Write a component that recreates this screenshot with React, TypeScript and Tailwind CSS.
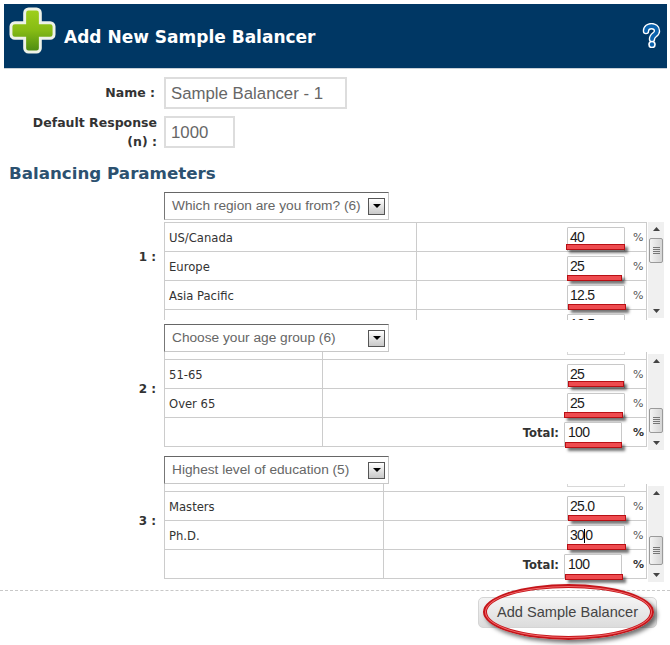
import type { ReactNode } from "react";

const sans = "font-['Tahoma','DejaVu_Sans',sans-serif]";

function Underline({ cls }: { cls: string }) {
  return <div className={`absolute h-[6px] border border-[#b80f14] bg-[#ee4b4f] shadow-[3px_3px_3px_rgba(0,0,0,0.55)] ${cls}`} />;
}

function Pct({ value, line, cls = "" }: { value: ReactNode; line?: string; cls?: string }) {
  return (
    <div className={`relative flex h-[25px] w-[58px] items-start rounded-[1px] border border-[#c8c8c8] bg-white font-['Liberation_Sans',sans-serif] text-[14px] leading-[19px] tracking-[-0.7px] text-[#1a1a1a] ${cls}`}>
      {value}
      {line && <Underline cls={line} />}
    </div>
  );
}

function Row({ label, value, line, col, hidePct }: { label: string; value: ReactNode; line?: string; col: string; hidePct?: boolean }) {
  return (
    <div className="flex h-[29px] border-b border-[#cccccc]">
      <div className={`flex h-full items-center border-r border-[#cccccc] pl-[4px] pt-[3px] text-[11.6px] text-[#333] ${col}`}>{label}</div>
      <div className="flex flex-1 items-start justify-end pr-[3px] pt-[4px]">
        <Pct value={value} line={line} cls="pl-[2px]" />
        <span className={`ml-[8px] mt-[3px] w-[10px] text-[11px] text-[#555] ${hidePct ? "invisible" : ""}`}>%</span>
      </div>
    </div>
  );
}

function Total({ value, line, col }: { value: string; line: string; col: string }) {
  return (
    <div className="flex h-[29px] border-b border-[#cccccc]">
      <div className={`h-full border-r border-[#cccccc] ${col}`} />
      <div className="flex flex-1 items-start justify-end pr-[3px] pt-[4px]">
        <span className="mr-[5px] mt-[3px] text-[11.6px] font-bold text-[#333]">Total:</span>
        <Pct value={value} line={line} cls="pl-[3px]" />
        <span className="ml-[11px] mt-[3px] w-[10px] text-[11px] font-bold text-[#333]">%</span>
      </div>
    </div>
  );
}

function Partial({ col }: { col: string }) {
  return (
    <div className="flex h-[8px] shrink-0 border-b border-[#cccccc]">
      <div className={`h-full border-r border-[#cccccc] ${col}`} />
      <div className="flex flex-1 justify-end pr-[21px]">
        <div className="h-[3px] w-[58px] border-x border-b border-[#d8d8d8]" />
      </div>
    </div>
  );
}

function ArrowBtn({ up }: { up: boolean }) {
  return (
    <div className="flex h-[14px] items-center justify-center">
      <svg width="7" height="4" viewBox="0 0 7 4"><path d={up ? "M3.5 0 7 4H0Z" : "M0 0H7L3.5 4Z"} fill="#444" /></svg>
    </div>
  );
}

function Scrollbar({ top, thumb, cls = "" }: { top: number; thumb: number; cls?: string }) {
  return (
    <div className={`flex h-[96px] w-[16px] flex-col justify-between bg-[#f0f0f0] ${cls}`}>
      <ArrowBtn up />
      <div className="relative flex-1">
        <div className="absolute inset-x-[1px] flex flex-col items-center justify-center gap-[1px] rounded-[2px] border border-[#9a9a9a] bg-gradient-to-r from-[#f4f4f4] to-[#d5d5d5]" style={{ top, height: thumb }}>
          <i className="block h-px w-[7px] bg-[#777]" />
          <i className="block h-px w-[7px] bg-[#777]" />
          <i className="block h-px w-[7px] bg-[#777]" />
          <i className="block h-px w-[7px] bg-[#777]" />
        </div>
      </div>
      <ArrowBtn up={false} />
    </div>
  );
}

function Select({ text }: { text: string }) {
  return (
    <div className="flex h-[28px] w-[225px] items-center justify-between border border-[#c8c8c8] border-l-[#777] border-t-[#666] bg-white pl-[7px] pr-[3px] font-['Liberation_Sans',sans-serif] text-[13.7px] text-[#666]">
      <span className="pt-[1px]">{text}</span>
      <span className="flex h-[17px] w-[17px] items-center justify-center border border-[#555] bg-gradient-to-b from-[#fff] to-[#c8c8c8]">
        <svg width="8" height="4" viewBox="0 0 8 4"><path d="M0 0H8L4 4Z" fill="#000" /></svg>
      </span>
    </div>
  );
}

export default function App() {
  return (
    <div className={`h-[645px] w-[670px] overflow-hidden bg-white ${sans}`}>
      <div className="relative ml-[4px] mt-[4px] flex h-[65px] w-[663px] items-center border-b border-[#c8d0d8] bg-[#003764]">
        <svg className="absolute left-[5px] top-[3px]" width="47" height="47" viewBox="0 0 48 48">
          <defs>
            <linearGradient id="g" x1="0" y1="0" x2="0" y2="1">
              <stop offset="0" stopColor="#a0d01c" />
              <stop offset="0.5" stopColor="#86bb14" />
              <stop offset="1" stopColor="#4b8a12" />
            </linearGradient>
          </defs>
          <path d="M16 6a4 4 0 0 1 4-4h8a4 4 0 0 1 4 4v10h10a4 4 0 0 1 4 4v8a4 4 0 0 1-4 4H32v10a4 4 0 0 1-4 4h-8a4 4 0 0 1-4-4V32H6a4 4 0 0 1-4-4v-8a4 4 0 0 1 4-4h10Z" fill="url(#g)" stroke="#eef2e8" strokeWidth="3" />
        </svg>
        <h1 className="ml-[60px] pt-[3px] text-[17px] font-bold text-white">Add New Sample Balancer</h1>
        <svg className="absolute right-[6px] top-[19px]" width="19" height="25" viewBox="0 0 19 25">
          <path d="M4 8c0-6.500 11-6.500 11 0 0 4-5 3.500-5 8" fill="none" stroke="#fff" strokeWidth="6.500" strokeLinecap="round" />
          <circle cx="10" cy="21.500" r="3" fill="#0a62ad" stroke="#fff" strokeWidth="1.600" />
          <path d="M4 8c0-6.500 11-6.500 11 0 0 4-5 3.500-5 8" fill="none" stroke="#0a62ad" strokeWidth="3.800" strokeLinecap="round" />
        </svg>
      </div>

      <div className="mt-[8px] flex h-[32px] items-center">
        <div className="w-[157px] pr-[2px] pt-[1px] text-right text-[12.5px] font-bold text-[#333]">Name&nbsp;:</div>
        <div className="ml-[7px] flex h-[32px] w-[183px] items-center border-2 border-[#dddddd] pl-[5px] pt-[1px] font-['Liberation_Sans',sans-serif] text-[16.8px] text-[#666]">Sample Balancer - 1</div>
      </div>
      <div className="mt-[7px] flex h-[32px] items-center">
        <div className="w-[157px] text-right text-[12.5px] font-bold leading-[19px] text-[#333]">
          Default Response<br />(n) :
        </div>
        <div className="ml-[7px] flex h-[32px] w-[71px] items-center border-2 border-[#dddddd] pl-[5px] pt-[1px] font-['Liberation_Sans',sans-serif] text-[16.8px] text-[#666]">1000</div>
      </div>

      <h2 className="ml-[9px] mt-[13px] text-[16.7px] font-bold leading-[24px] text-[#2c5170]">Balancing Parameters</h2>

      <div className="mt-[7px] flex flex-col">
        <div className="flex h-[132px]">
          <div className="flex w-[164px] items-center justify-end pb-[3px] pr-[8px] text-[12px] font-bold text-[#333]">1 :</div>
          <div className="w-[503px]">
            <Select text="Which region are you from? (6)" />
            <div className="mt-[2px] flex">
              <div className="h-[98px] w-[483px] overflow-hidden border-x border-t border-[#cccccc]">
                <Row label="US/Canada" value="40" col="w-[252px]" line="left-[-2px] top-[16px] w-[59px]" />
                <Row label="Europe" value="25" col="w-[252px]" line="left-[-1px] top-[18px] w-[55px]" />
                <Row label="Asia Pacific" value="12.5" col="w-[252px]" line="left-[0px] top-[18px] w-[58px]" />
                <Row label="" value="12.5" col="w-[252px]" hidePct />
              </div>
              <Scrollbar top={2} thumb={25} cls="ml-[1px]" />
            </div>
          </div>
        </div>

        <div className="flex h-[132px]">
          <div className="flex w-[164px] items-center justify-end pb-[3px] pr-[8px] text-[12px] font-bold text-[#333]">2 :</div>
          <div className="w-[503px]">
            <Select text="Choose your age group (6)" />
            <div className="flex">
              <div className="flex h-[95px] w-[483px] flex-col border-x border-[#cccccc]">
                <Partial col="w-[158px]" />
                <Row label="51-65" value="25" col="w-[158px]" line="left-[0px] top-[16px] w-[56px]" />
                <Row label="Over 65" value="25" col="w-[158px]" line="left-[-4px] top-[18px] w-[59px]" />
                <Total value="100" col="w-[158px]" line="left-[0px] top-[19px] w-[57px]" />
              </div>
              <Scrollbar top={40} thumb={25} cls="ml-[1px] mt-[2px]" />
            </div>
          </div>
        </div>

        <div className="flex h-[126px]">
          <div className="flex w-[164px] items-center justify-end pr-[8px] pt-[3px] text-[12px] font-bold text-[#333]">3 :</div>
          <div className="w-[503px]">
            <Select text="Highest level of education (5)" />
            <div className="flex">
              <div className="flex h-[95px] w-[483px] flex-col border-x border-[#cccccc]">
                <Partial col="w-[219px]" />
                <Row label="Masters" value="25.0" col="w-[219px]" line="left-[0px] top-[18px] w-[58px]" />
                <Row
                  label="Ph.D."
                  value={<>30<i className="mt-[3px] inline-block h-[14px] w-px bg-black" />0</>}
                  col="w-[219px]"
                  line="left-[-1px] top-[18px] w-[59px]"
                />
                <Total value="100" col="w-[219px]" line="left-[0px] top-[19px] w-[58px]" />
              </div>
              <Scrollbar top={36} thumb={29} cls="ml-[1px] mt-[2px]" />
            </div>
          </div>
        </div>
      </div>

      <div className="mt-[8px] flex h-[55px] justify-end border-t border-dashed border-[#c8c8c8] pr-[13px]">
        <div className="relative mt-[6px] flex h-[31px] w-[179px] items-center justify-center rounded-[5px] border border-[#d5d5d5] bg-gradient-to-b from-[#f4f4f4] to-[#dcdcdc] pt-[1px] font-['Liberation_Sans',sans-serif] text-[14.6px] text-[#444]">
          Add Sample Balancer
          <div className="absolute left-[4px] top-[-14px] h-[56px] w-[171px] rounded-[50%] border-[4px] border-[#c41419] shadow-[3px_3px_4px_rgba(0,0,0,0.55)]">
            <div className="absolute inset-[-2px] rounded-[50%] border border-[#f2686b]" />
          </div>
        </div>
      </div>
    </div>
  );
}
